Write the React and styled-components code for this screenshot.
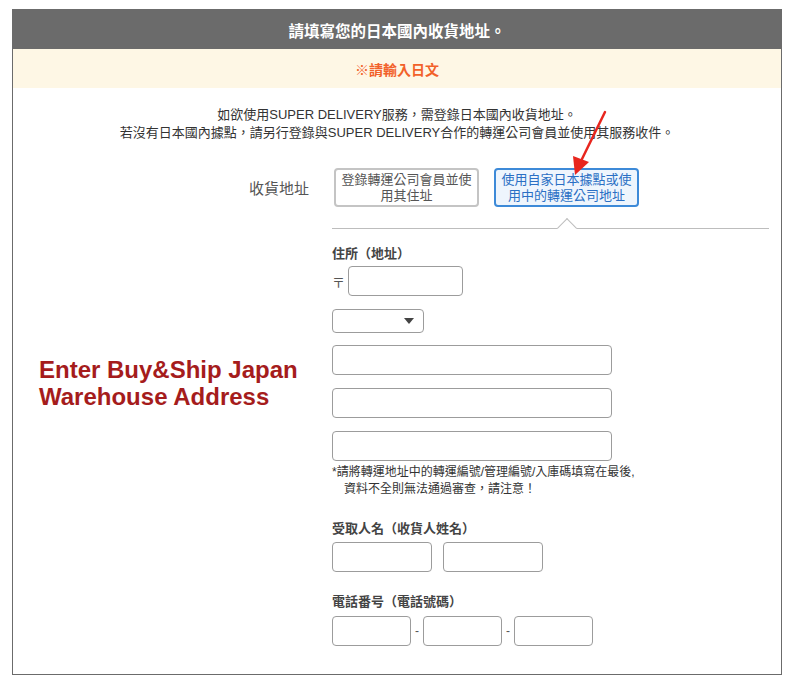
import React from 'react'
import styled, { createGlobalStyle } from 'styled-components'

const GlobalStyle = createGlobalStyle`
    body {
        margin: 0;
        background: #fff;
        font-family: "Liberation Sans", "Noto Sans CJK TC", sans-serif;
        color: #333;
    }
`;

const Page = styled.div`
    padding: 9px 0 0 12px;
`;

const Frame = styled.section`
    position: relative;
    width: 770px;
    height: 666px;
    box-sizing: border-box;
    border: 1px solid #6b6b6b;
`;

const Header = styled.div`
    height: 39px;
    background: #6b6b6b;
    color: #fff;
    font-size: 15.5px;
    font-weight: bold;
    display: flex;
    align-items: center;
    justify-content: center;
`;

const Notice = styled.div`
    height: 39px;
    background: #fef7e5;
    color: #f2612a;
    font-size: 14px;
    font-weight: bold;
    display: flex;
    align-items: center;
    justify-content: center;
`;

const Intro = styled.p`
    margin: 18px 0 0;
    text-align: center;
    font-size: 13px;
    line-height: 18px;
    color: #333;
`;

const FormGrid = styled.div`
    display: grid;
    grid-template-columns: 319px 1fr;
    padding-right: 12px;
    margin-top: 26px;
`;

const RowLabel = styled.div`
    display: flex;
    align-items: center;
    justify-content: flex-end;
    padding-right: 23px;
    font-size: 15px;
    color: #555;
`;

const Choices = styled.div`
    display: flex;
    gap: 15px;
    padding-left: 2px;
`;

const Choice = styled.button`
    width: 145px;
    height: 39px;
    box-sizing: border-box;
    padding: 0 2px;
    border-radius: 4px;
    border: 2px solid ${p => (p.active ? '#3d8ad8' : '#c4c4c4')};
    background: ${p => (p.active ? '#eef5fd' : '#fff')};
    color: ${p => (p.active ? '#2a6fc4' : '#555')};
    font-family: inherit;
    font-size: 13px;
    line-height: 16px;
    text-align: center;
`;

const Divider = styled.div`
    grid-column: 2;
    position: relative;
    margin-top: 21px;
    border-top: 1px solid #bdbdbd;

    &::before {
        content: '';
        position: absolute;
        left: 228px;
        top: -8px;
        width: 13px;
        height: 13px;
        background: #fff;
        border-top: 1px solid #bdbdbd;
        border-left: 1px solid #bdbdbd;
        transform: rotate(45deg);
    }
`;

const Annotation = styled.div`
    padding: 127px 0 0 26px;
    color: #a51c1c;
    font-size: 24px;
    font-weight: bold;
    line-height: 27px;
`;

const Fields = styled.div`
    display: flex;
    flex-direction: column;
    align-items: flex-start;
    padding-top: 16px;
`;

const FieldLabel = styled.div`
    margin-top: ${p => p.gap || 0}px;
    font-size: 13px;
    line-height: 18px;
    font-weight: bold;
    color: #444;
`;

const Line = styled.div`
    display: flex;
    align-items: center;
    gap: ${p => p.gap || 0}px;
    margin-top: ${p => p.top || 0}px;
`;

const Postal = styled.span`
    width: 16px;
    font-size: 13px;
    color: #555;
`;

const Input = styled.div`
    width: ${p => p.w}px;
    height: 30px;
    box-sizing: border-box;
    border: 1px solid #9c9c9c;
    border-radius: 4px;
    background: #fff;
`;

const Select = styled.div`
    width: 92px;
    height: 24px;
    margin-top: 13px;
    box-sizing: border-box;
    border: 1px solid #9c9c9c;
    border-radius: 4px;
    display: flex;
    align-items: center;
    justify-content: flex-end;
    padding-right: 9px;

    &::after {
        content: '';
        border-left: 5px solid transparent;
        border-right: 5px solid transparent;
        border-top: 6px solid #444;
    }
`;

const Note = styled.p`
    margin: 3px 0 0;
    font-size: 12px;
    line-height: 17px;
    color: #333;

    span {
        display: block;
        padding-left: 12px;
    }
`;

const Dash = styled.span`
    font-size: 12px;
    color: #555;
`;

const Arrow = styled.svg`
    position: absolute;
    left: 545px;
    top: 99px;
`;

export default function App() {
    return (
        <Page>
            <GlobalStyle />
            <Frame>
                <Header>請填寫您的日本國內收貨地址。</Header>
                <Notice>※請輸入日文</Notice>
                <Intro>
                    如欲使用SUPER DELIVERY服務，需登錄日本國內收貨地址。<br />
                    若沒有日本國內據點，請另行登錄與SUPER DELIVERY合作的轉運公司會員並使用其服務收件。
                </Intro>
                <FormGrid>
                    <RowLabel>收貨地址</RowLabel>
                    <Choices>
                        <Choice>登錄轉運公司會員並使用其住址</Choice>
                        <Choice active>使用自家日本據點或使用中的轉運公司地址</Choice>
                    </Choices>
                    <Divider />
                    <Annotation>
                        Enter Buy&amp;Ship Japan<br />
                        Warehouse Address
                    </Annotation>
                    <Fields>
                        <FieldLabel>住所（地址）</FieldLabel>
                        <Line top={3}>
                            <Postal>〒</Postal>
                            <Input w={115} />
                        </Line>
                        <Select />
                        <Line top={12}><Input w={280} /></Line>
                        <Line top={13}><Input w={280} /></Line>
                        <Line top={13}><Input w={280} /></Line>
                        <Note>
                            *請將轉運地址中的轉運編號/管理編號/入庫碼填寫在最後,
                            <span>資料不全則無法通過審查，請注意！</span>
                        </Note>
                        <FieldLabel gap={22}>受取人名（收貨人姓名）</FieldLabel>
                        <Line top={4} gap={11}>
                            <Input w={100} />
                            <Input w={100} />
                        </Line>
                        <FieldLabel gap={21}>電話番号（電話號碼）</FieldLabel>
                        <Line top={5} gap={4}>
                            <Input w={79} />
                            <Dash>-</Dash>
                            <Input w={79} />
                            <Dash>-</Dash>
                            <Input w={79} />
                        </Line>
                    </Fields>
                </FormGrid>
                <Arrow width="60" height="70" viewBox="0 0 60 70">
                    <line x1="47" y1="3" x2="24" y2="50" stroke="#e8261e" strokeWidth="2.5" strokeLinecap="round" />
                    <polygon points="17,66 15,47 31,53" fill="#e8261e" />
                </Arrow>
            </Frame>
        </Page>
    )
}
